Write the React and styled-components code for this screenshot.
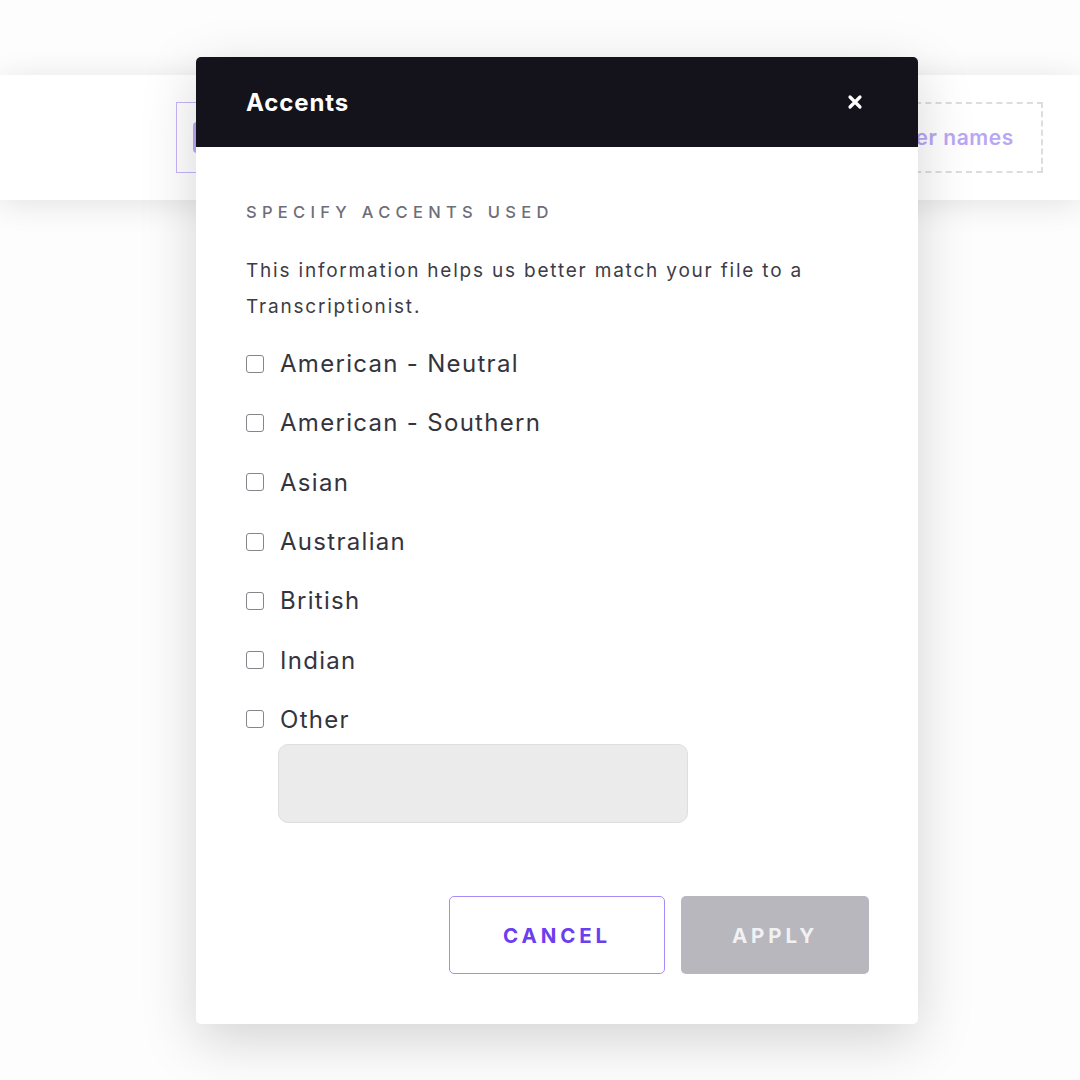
import React, { useState } from 'react'
import styled, { createGlobalStyle } from 'styled-components'

const ACCENTS = [
  'American - Neutral',
  'American - Southern',
  'Asian',
  'Australian',
  'British',
  'Indian',
  'Other',
]

const App = () => {
  const [checked, setChecked] = useState({})
  const [other, setOther] = useState('')

  const toggle = (name) => {
    setChecked((prev) => ({ ...prev, [name]: !prev[name] }))
  }

  const hasSelection = Object.values(checked).some(Boolean)

  return (
    <Page>
      <GlobalStyle />
      <TopBar>
        <FileBox>
          <FileTag />
        </FileBox>
        <SpeakerBox>Add speaker names</SpeakerBox>
      </TopBar>

      <Modal>
        <ModalHeader>
          <Title>Accents</Title>
          <CloseButton aria-label="Close">
            <svg width="16" height="16" viewBox="0 0 16 16">
              <path
                d="M3 3 L13 13 M13 3 L3 13"
                stroke="#fff"
                strokeWidth="3.2"
                strokeLinecap="round"
              />
            </svg>
          </CloseButton>
        </ModalHeader>

        <ModalBody>
          <Overline>Specify accents used</Overline>
          <Help>
            This information helps us better match your file to a
            Transcriptionist.
          </Help>

          <List>
            {ACCENTS.map((name) => (
              <Option key={name}>
                <Box
                  type="checkbox"
                  checked={!!checked[name]}
                  onChange={() => toggle(name)}
                />
                {name}
              </Option>
            ))}
          </List>
          <OtherInput value={other} onChange={(e) => setOther(e.target.value)} />

          <Actions>
            <CancelButton>Cancel</CancelButton>
            <ApplyButton disabled={!hasSelection}>Apply</ApplyButton>
          </Actions>
        </ModalBody>
      </Modal>
    </Page>
  )
}

export default App

const GlobalStyle = createGlobalStyle`
  html, body {
    margin: 0;
    padding: 0;
    background: #fdfdfd;
    font-family: Inter, "Noto Sans", sans-serif;
  }
  * {
    box-sizing: border-box;
  }
`

const Page = styled.div`
  position: relative;
  width: 1080px;
  height: 1080px;
  overflow: hidden;
  padding-top: 75px;
`

const TopBar = styled.div`
  height: 125px;
  background: #fff;
  box-shadow: 0 4px 30px rgba(0, 0, 0, 0.11);
  display: flex;
  align-items: center;
  justify-content: space-between;
  padding: 0 37px 0 176px;
`

const FileBox = styled.div`
  width: 320px;
  height: 71px;
  border: 1.5px solid #c7b5fb;
  display: flex;
  align-items: center;
  padding-left: 16px;
`

const FileTag = styled.div`
  width: 30px;
  height: 31px;
  border-radius: 4px;
  background: #bda8f8;
`

const SpeakerBox = styled.div`
  width: 280px;
  height: 71px;
  border: 2px dashed #dddddd;
  display: flex;
  align-items: center;
  justify-content: flex-end;
  padding-right: 27px;
  font-size: 21px;
  font-weight: 600;
  letter-spacing: 0.6px;
  color: #b9a7f5;
`

const Modal = styled.div`
  position: absolute;
  left: 196px;
  top: 57px;
  width: 722px;
  height: 967px;
  background: #fff;
  border-radius: 5px;
  box-shadow: 0 16px 55px rgba(0, 0, 0, 0.17);
  display: flex;
  flex-direction: column;
  overflow: hidden;
`

const ModalHeader = styled.header`
  height: 90px;
  flex-shrink: 0;
  background: #14121b;
  display: flex;
  align-items: center;
  justify-content: space-between;
  padding: 0 55px 0 50px;
`

const Title = styled.h2`
  margin: 0;
  font-size: 24px;
  font-weight: 700;
  color: #fff;
  letter-spacing: 0.9px;
`

const CloseButton = styled.button`
  border: none;
  background: none;
  padding: 0;
  display: flex;
  cursor: pointer;
`

const ModalBody = styled.div`
  flex: 1;
  display: flex;
  flex-direction: column;
  padding: 54px 49px 50px 50px;
`

const Overline = styled.div`
  font-size: 16.5px;
  line-height: 22px;
  font-weight: 500;
  letter-spacing: 5.3px;
  text-transform: uppercase;
  color: #6e6e78;
`

const Help = styled.p`
  margin: 30px 0 0;
  font-size: 19px;
  line-height: 36px;
  letter-spacing: 1.8px;
  color: #3c3c46;
`

const List = styled.div`
  display: flex;
  flex-direction: column;
  margin-top: 9px;
`

const Option = styled.label`
  display: flex;
  align-items: center;
  gap: 16px;
  height: 59.3px;
  font-size: 24px;
  letter-spacing: 1.3px;
  color: #34343e;
  cursor: pointer;
`

const Box = styled.input`
  appearance: none;
  margin: 0;
  width: 18px;
  height: 18px;
  border: 1.5px solid #85858c;
  border-radius: 3px;
  background: #fff;
  cursor: pointer;

  &:checked {
    background: #6b3ff0;
    border-color: #6b3ff0;
  }
`

const OtherInput = styled.input`
  margin: -5px 0 0 32px;
  width: 410px;
  height: 79px;
  border: 1.5px solid #dedede;
  border-radius: 10px;
  background: #ebebeb;
  font-size: 20px;
  padding: 0 16px;
  outline: none;
`

const Actions = styled.div`
  margin-top: auto;
  display: flex;
  justify-content: flex-end;
  gap: 16px;
`

const ButtonBase = styled.button`
  height: 78px;
  border-radius: 5px;
  font-family: Inter, "Noto Sans", sans-serif;
  font-size: 20.5px;
  font-weight: 700;
  letter-spacing: 3.9px;
  text-transform: uppercase;
  cursor: pointer;
`

const CancelButton = styled(ButtonBase)`
  width: 216px;
  background: #fff;
  border: 1.5px solid #a68cfb;
  color: #6b3ff0;
`

const ApplyButton = styled(ButtonBase)`
  width: 188px;
  background: #b8b7bd;
  border: none;
  color: #f1f1f3;

  &:disabled {
    cursor: default;
  }
`
